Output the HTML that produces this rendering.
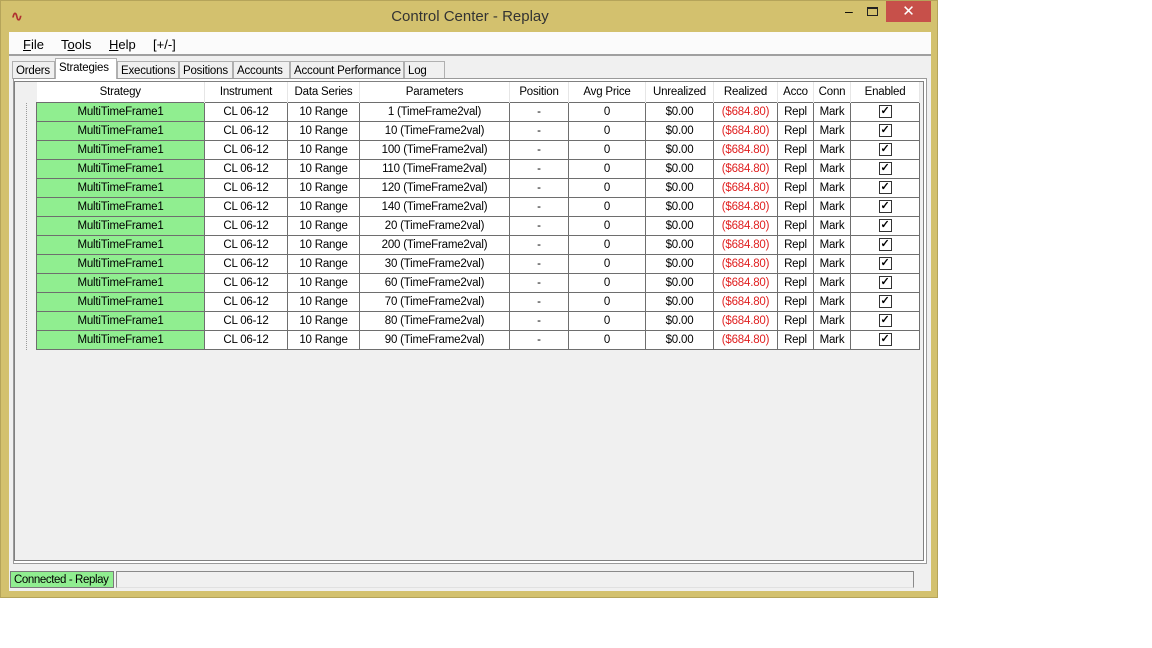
<!DOCTYPE html>
<html><head><style>
*{margin:0;padding:0;box-sizing:border-box}
body{width:1152px;height:648px;background:#fff;font-family:"Liberation Sans",sans-serif;font-size:12px;color:#000;position:relative;overflow:hidden}
.win{position:absolute;left:0;top:0;width:938px;height:598px;background:#d3c16e;border:1px solid #b5a45a}
.title{position:absolute;left:0;top:7px;width:938px;text-align:center;font-size:15px;color:#333}
.close{position:absolute;left:885px;top:0;width:45px;height:21px;background:#c7504a;color:#fff;text-align:center;font-size:15px;line-height:21px}
.client{position:absolute;left:8px;top:31px;width:922px;height:559px;background:#f0f0f0}
.menu{position:absolute;left:0;top:0;width:922px;height:24px;background:#fbfbfb;border-bottom:2px solid #a0a0a0}
.menu span{position:absolute;top:5px;font-size:13px}
.tab{position:absolute;top:29px;height:18px;border:1px solid #b0b0b0;border-bottom:none;background:#f0f0f0;font-size:11.5px;padding:3px 0 0 3px;white-space:nowrap;overflow:hidden;letter-spacing:-0.2px}
.panel{position:absolute;left:4px;top:46px;width:914px;height:486px;border:1px solid #9a9a9a;background:#fff}
.grid{position:absolute;left:5px;top:49px;width:910px;height:480px;border:1px solid #808080;background:#f0f0f0}
table{position:absolute;left:21px;top:0px;border-collapse:collapse;table-layout:fixed}
td{height:19px;text-align:center;border:1px solid #6e6e6e;background:#fff;font-size:11.5px;white-space:nowrap;overflow:hidden;padding:0;letter-spacing:-0.2px}
tr.h td{background:#fff;border:none;border-right:1px solid #e6e6e6;height:20px}
td.g{background:#90ee90}
td.r{color:#e02020}
.cb{display:inline-block;width:13px;height:13px;border:1px solid #333;vertical-align:middle;font-size:11px;line-height:11px;font-weight:bold}
.status{position:absolute;left:0;top:539px;width:922px;height:18px}
.dots{position:absolute;left:11px;top:21px;width:8px;height:247px;border-left:1px dotted #999}
</style></head><body>
<div class="win">
<div style="position:absolute;left:10px;top:7px;color:#b03030;font-size:14px;font-weight:bold">∿</div>
<div class="title">Control Center - Replay</div>
<div style="position:absolute;left:844px;top:2px;font-size:14px">–</div>
<div style="position:absolute;left:866px;top:6px;width:11px;height:9px;border:1px solid #222;border-top-width:2px"></div>
<div class="close">✕</div>
<div class="client">
<div class="menu"><span style="left:14px"><u>F</u>ile</span><span style="left:52px">T<u>o</u>ols</span><span style="left:100px"><u>H</u>elp</span><span style="left:144px">[+/-]</span></div>
<div class="tab" style="left:3px;width:43px">Orders</div>
<div class="tab" style="left:46px;top:26px;height:21px;background:#fff;width:62px;z-index:2;padding-top:3px">Strategies</div>
<div class="tab" style="left:108px;width:62px">Executions</div>
<div class="tab" style="left:170px;width:54px">Positions</div>
<div class="tab" style="left:224px;width:57px">Accounts</div>
<div class="tab" style="left:281px;width:114px">Account Performance</div>
<div class="tab" style="left:395px;width:41px">Log</div>
<div class="panel"></div>
<div class="grid">
<div class="dots"></div>
<table>
<colgroup><col style="width:168px"><col style="width:83px"><col style="width:72px"><col style="width:150px"><col style="width:59px"><col style="width:77px"><col style="width:68px"><col style="width:64px"><col style="width:36px"><col style="width:37px"><col style="width:69px"></colgroup>
<tr class="h"><td>Strategy</td><td>Instrument</td><td>Data Series</td><td>Parameters</td><td>Position</td><td>Avg Price</td><td>Unrealized</td><td>Realized</td><td>Acco</td><td>Conn</td><td>Enabled</td></tr>
<tr><td class="g">MultiTimeFrame1</td><td>CL 06-12</td><td>10 Range</td><td>1 (TimeFrame2val)</td><td>-</td><td>0</td><td>$0.00</td><td class="r">($684.80)</td><td>Repl</td><td>Mark</td><td><span class="cb">✓</span></td></tr>
<tr><td class="g">MultiTimeFrame1</td><td>CL 06-12</td><td>10 Range</td><td>10 (TimeFrame2val)</td><td>-</td><td>0</td><td>$0.00</td><td class="r">($684.80)</td><td>Repl</td><td>Mark</td><td><span class="cb">✓</span></td></tr>
<tr><td class="g">MultiTimeFrame1</td><td>CL 06-12</td><td>10 Range</td><td>100 (TimeFrame2val)</td><td>-</td><td>0</td><td>$0.00</td><td class="r">($684.80)</td><td>Repl</td><td>Mark</td><td><span class="cb">✓</span></td></tr>
<tr><td class="g">MultiTimeFrame1</td><td>CL 06-12</td><td>10 Range</td><td>110 (TimeFrame2val)</td><td>-</td><td>0</td><td>$0.00</td><td class="r">($684.80)</td><td>Repl</td><td>Mark</td><td><span class="cb">✓</span></td></tr>
<tr><td class="g">MultiTimeFrame1</td><td>CL 06-12</td><td>10 Range</td><td>120 (TimeFrame2val)</td><td>-</td><td>0</td><td>$0.00</td><td class="r">($684.80)</td><td>Repl</td><td>Mark</td><td><span class="cb">✓</span></td></tr>
<tr><td class="g">MultiTimeFrame1</td><td>CL 06-12</td><td>10 Range</td><td>140 (TimeFrame2val)</td><td>-</td><td>0</td><td>$0.00</td><td class="r">($684.80)</td><td>Repl</td><td>Mark</td><td><span class="cb">✓</span></td></tr>
<tr><td class="g">MultiTimeFrame1</td><td>CL 06-12</td><td>10 Range</td><td>20 (TimeFrame2val)</td><td>-</td><td>0</td><td>$0.00</td><td class="r">($684.80)</td><td>Repl</td><td>Mark</td><td><span class="cb">✓</span></td></tr>
<tr><td class="g">MultiTimeFrame1</td><td>CL 06-12</td><td>10 Range</td><td>200 (TimeFrame2val)</td><td>-</td><td>0</td><td>$0.00</td><td class="r">($684.80)</td><td>Repl</td><td>Mark</td><td><span class="cb">✓</span></td></tr>
<tr><td class="g">MultiTimeFrame1</td><td>CL 06-12</td><td>10 Range</td><td>30 (TimeFrame2val)</td><td>-</td><td>0</td><td>$0.00</td><td class="r">($684.80)</td><td>Repl</td><td>Mark</td><td><span class="cb">✓</span></td></tr>
<tr><td class="g">MultiTimeFrame1</td><td>CL 06-12</td><td>10 Range</td><td>60 (TimeFrame2val)</td><td>-</td><td>0</td><td>$0.00</td><td class="r">($684.80)</td><td>Repl</td><td>Mark</td><td><span class="cb">✓</span></td></tr>
<tr><td class="g">MultiTimeFrame1</td><td>CL 06-12</td><td>10 Range</td><td>70 (TimeFrame2val)</td><td>-</td><td>0</td><td>$0.00</td><td class="r">($684.80)</td><td>Repl</td><td>Mark</td><td><span class="cb">✓</span></td></tr>
<tr><td class="g">MultiTimeFrame1</td><td>CL 06-12</td><td>10 Range</td><td>80 (TimeFrame2val)</td><td>-</td><td>0</td><td>$0.00</td><td class="r">($684.80)</td><td>Repl</td><td>Mark</td><td><span class="cb">✓</span></td></tr>
<tr><td class="g">MultiTimeFrame1</td><td>CL 06-12</td><td>10 Range</td><td>90 (TimeFrame2val)</td><td>-</td><td>0</td><td>$0.00</td><td class="r">($684.80)</td><td>Repl</td><td>Mark</td><td><span class="cb">✓</span></td></tr>
</table>
</div>
<div class="status">
<div style="position:absolute;left:1px;top:0;width:104px;height:17px;background:#90ee90;border:1px solid #7a7a7a;font-size:11.5px;padding:2px 3px;white-space:nowrap;overflow:hidden;letter-spacing:-0.4px">Connected - Replay</div>
<div style="position:absolute;left:107px;top:0;width:798px;height:17px;border:1px solid #8a8a8a;border-bottom-color:#e0e0e0"></div>
</div>
</div>
</div>
</body></html>
